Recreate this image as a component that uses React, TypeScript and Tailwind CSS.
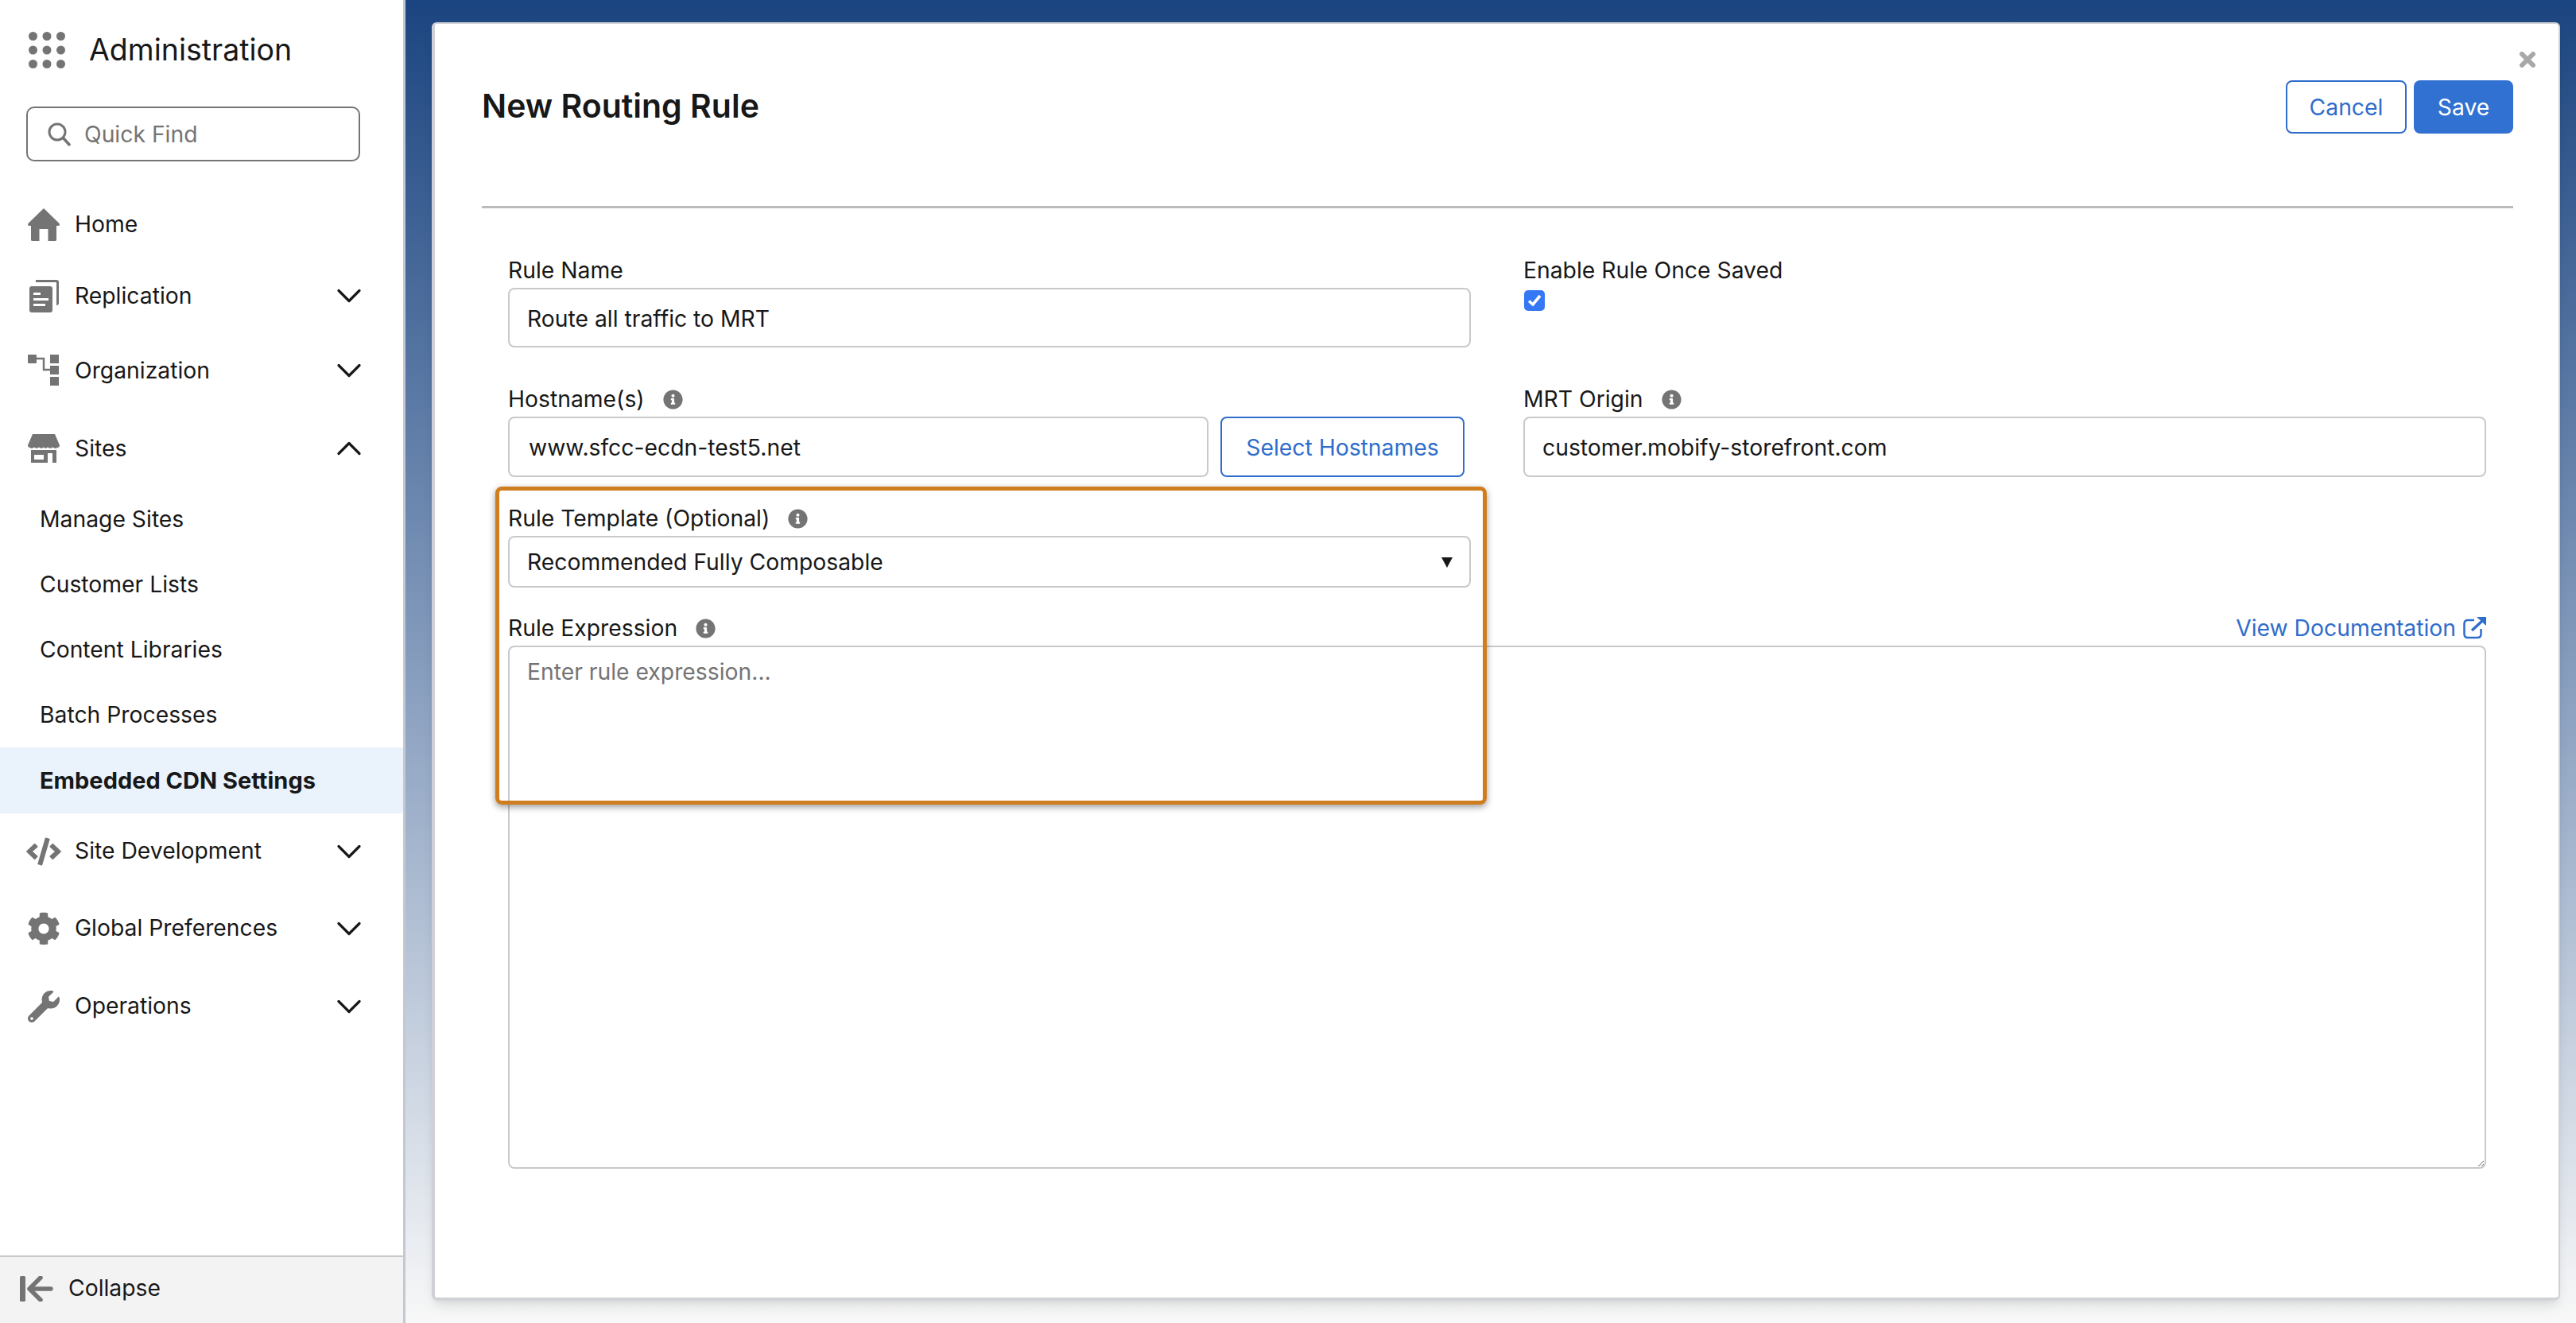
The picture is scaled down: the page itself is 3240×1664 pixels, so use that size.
import { ChevronDown, ChevronUp } from "lucide-react";
import { FaCode, FaCog, FaInfoCircle, FaWrench } from "react-icons/fa";
import type { ReactNode } from "react";

const font = "font-['Inter','Liberation_Sans',sans-serif]";

function HomeIcon() {
    return (
        <svg width="40" height="41" viewBox="0 0 40 41" fill="#747474">
            <path d="M20 0 L39.5 19 Q41 22 38 22 H36 V39.5 Q36 41 34.5 41 H25.5 V26 H14.5 V41 H5.5 Q4 41 4 39.5 V22 H2 Q-1 22 0.5 19 Z" />
        </svg>
    );
}

function ReplicationIcon() {
    return (
        <svg width="40" height="41" viewBox="0 0 40 41" fill="#747474">
            <path d="M10 0 H36 Q39 0 39 3 V29 Q39 32 36 32 V4 Q36 3 35 3 H10 Z" />
            <rect x="2" y="8" width="29" height="33" rx="3" />
            <rect x="7" y="16" width="9" height="3" fill="#fff" />
            <rect x="7" y="23" width="19" height="3" fill="#fff" />
            <rect x="7" y="30" width="15" height="3" fill="#fff" />
        </svg>
    );
}

function OrgIcon() {
    return (
        <svg width="40" height="40" viewBox="0 0 40 40" fill="#747474">
            <rect x="0" y="0" width="11" height="11" rx="1" />
            <rect x="28" y="0" width="11" height="11" />
            <rect x="28" y="14" width="11" height="11" />
            <rect x="28" y="28" width="11" height="11" />
            <path d="M10 5 H20 V19 H29" fill="none" stroke="#747474" strokeWidth="2.5" />
        </svg>
    );
}

function StoreIcon() {
    return (
        <svg width="40" height="36" viewBox="0 0 40 36" fill="#747474">
            <path d="M6 0 H34 L40 14 Q40 17 37 17 Q34.5 19 31.5 16.5 Q28 19 25 16.5 Q22 19 20 16.5 Q17 19 14 16.5 Q11 19 8 16.5 Q5 19 3 17 Q0 17 0 14 Z" />
            <path
                fillRule="evenodd"
                d="M4 20 H36 V36 H31 V24 H25 V36 H4 Z M8 26 V32 H20 V26 Z"
            />
        </svg>
    );
}

function CollapseIcon() {
    return (
        <svg width="42" height="32" viewBox="0 0 42 32" fill="#747474">
            <rect x="0" y="0" width="7" height="32" rx="1.5" />
            <path d="M26 2 L12 16 L26 30" fill="none" stroke="#747474" strokeWidth="5.5" strokeLinecap="round" strokeLinejoin="round" />
            <path d="M15 16 H39" fill="none" stroke="#747474" strokeWidth="5.5" strokeLinecap="round" />
        </svg>
    );
}

function ExternalIcon() {
    return (
        <svg width="29" height="28" viewBox="0 0 29 28" fill="none" stroke="#2f6dcb">
            <path d="M14 4 H6 Q1.5 4 1.5 8.5 V21.5 Q1.5 26 6 26 H18 Q22.5 26 22.5 21.5 V15" strokeWidth="2.5" />
            <path d="M11 17 L24 5" strokeWidth="3.5" />
            <path d="M17 0 H29 V11 Z" fill="#2f6dcb" stroke="none" />
        </svg>
    );
}

function AppsDots() {
    const spots = [5.5, 23, 40.5];
    return (
        <svg width="46" height="46" viewBox="0 0 46 46" fill="#747474">
            {spots.map((y) =>
                spots.map((x) => <circle key={`${x}-${y}`} cx={x} cy={y} r="5.5" />)
            )}
        </svg>
    );
}

function NavRow({ icon, label, open, h }: { icon: ReactNode; label: string; open?: boolean; h: string }) {
    return (
        <div className={`flex items-center pl-[33px] pr-[57px] ${h}`}>
            <span className="flex w-[44px] shrink-0 items-center justify-center">{icon}</span>
            <span className="ml-[17px] flex-1 text-[28.3px] text-[#181818]">{label}</span>
            {open === true && <ChevronUp size={52} strokeWidth={1.5} className="-mr-[15px] text-[#181818]" />}
            {open === false && <ChevronDown size={52} strokeWidth={1.5} className="-mr-[15px] text-[#181818]" />}
        </div>
    );
}

function SubRow({ label, active, h }: { label: string; active?: boolean; h: string }) {
    return (
        <div className={`flex items-center pl-[50px] text-[#181818] ${h} ${active ? "bg-[#eaf2fc] text-[29px] font-bold" : "text-[28.3px]"}`}>
            {label}
        </div>
    );
}

function FieldLabel({ children, info }: { children: ReactNode; info?: boolean }) {
    return (
        <div className="mb-[4px] flex h-[36px] items-center gap-[23px] text-[28.3px] text-[#181818]">
            <span>{children}</span>
            {info && <FaInfoCircle size={25} className="text-[#747474]" />}
        </div>
    );
}

const inputClass =
    "w-full rounded-[8px] border-2 border-[#c9c9c9] bg-white text-[28.3px] text-[#181818] outline-none";

export default function App() {
    return (
        <div className={`flex h-screen w-full overflow-hidden bg-linear-to-b from-[#1b4580] to-[#f8f8f8] ${font}`}>
            {/* Sidebar */}
            <aside className="flex h-full w-[510px] shrink-0 flex-col border-r-[3px] border-[#c4c8d0] bg-white">
                <div className="flex h-[134px] shrink-0 items-start pl-[36px] pt-[40px]">
                    <AppsDots />
                    <span className="ml-[30px] text-[37.5px] leading-[46px] text-[#181818]">Administration</span>
                </div>
                <div className="ml-[33px] flex h-[69px] w-[420px] shrink-0 items-center gap-[16px] rounded-[10px] border-2 border-[#747474] pl-[25px] text-[28.3px] text-[#747474]">
                    <svg width="30" height="30" viewBox="0 0 30 30" fill="none" stroke="#747474" strokeWidth="3">
                        <circle cx="12" cy="12" r="10" />
                        <path d="M19 19 L28 29" strokeWidth="3.5" />
                    </svg>
                    <span className="pt-[2px]">Quick Find</span>
                </div>
                <div className="mt-[34px]">
                    <NavRow icon={<HomeIcon />} label="Home" h="h-[90px]" />
                    <NavRow icon={<ReplicationIcon />} label="Replication" open={false} h="h-[90px]" />
                    <NavRow icon={<OrgIcon />} label="Organization" open={false} h="h-[98px]" />
                    <NavRow icon={<StoreIcon />} label="Sites" open={true} h="h-[98px]" />
                    <SubRow label="Manage Sites" h="h-[81px]" />
                    <SubRow label="Customer Lists" h="h-[82px]" />
                    <SubRow label="Content Libraries" h="h-[82px]" />
                    <SubRow label="Batch Processes" h="h-[82px]" />
                    <SubRow label="Embedded CDN Settings" active h="h-[83px]" />
                    <NavRow icon={<FaCode size={44} color="#747474" />} label="Site Development" open={false} h="h-[95px]" />
                    <NavRow icon={<FaCog size={42} color="#747474" />} label="Global Preferences" open={false} h="h-[99px]" />
                    <NavRow icon={<FaWrench size={40} color="#747474" />} label="Operations" open={false} h="h-[97px]" />
                </div>
                <div className="mt-auto flex h-[85px] items-center gap-[19px] border-t-2 border-[#c9c9c9] bg-[#f3f3f3] pb-[4px] pl-[25px] text-[28.3px] text-[#181818]">
                    <CollapseIcon />
                    Collapse
                </div>
            </aside>

            {/* Modal */}
            <main className="relative ml-[33px] mt-[28px] h-[1607px] w-[2677px] shrink-0 rounded-[6px] border-t-2 border-r-2 border-b-[3px] border-l-[4px] border-[#cfd1d6] bg-white pl-[59px] pr-[57px] pt-[71px] shadow-lg">
                <svg width="20" height="20" viewBox="0 0 20 20" stroke="#a8a8a8" strokeWidth="6" strokeLinecap="round" className="absolute right-[29px] top-[35px]">
                    <path d="M3 3 L17 17 M17 3 L3 17" />
                </svg>
                <div className="flex h-[67px] items-center justify-between">
                    <h1 className="-mt-[2px] text-[41px] font-semibold text-[#181818]">New Routing Rule</h1>
                    <div className="flex gap-[9px]">
                        <button className="h-[67px] w-[152px] rounded-[8px] border-2 border-[#2f6dcb] pt-[1px] text-[28.3px] text-[#2f6dcb]">
                            Cancel
                        </button>
                        <button className="h-[67px] w-[125px] rounded-[8px] bg-[#3071d1] pt-[1px] text-[28.3px] text-white">Save</button>
                    </div>
                </div>
                <div className="mt-[91px] border-t-[3px] border-[#bcbcbc]" />

                <div className="mt-[60px] pl-[33px] pr-[34px]">
                    <div className="grid grid-cols-2 gap-x-[66px]">
                        <div>
                            <FieldLabel>Rule Name</FieldLabel>
                            <input readOnly value="Route all traffic to MRT" className={`${inputClass} h-[75px] px-[22px] pt-[2px]`} />
                        </div>
                        <div>
                            <FieldLabel>Enable Rule Once Saved</FieldLabel>
                            <div className="ml-[1px] mt-[7px] flex h-[26px] w-[26px] items-center justify-center rounded-[5px] bg-[#3478f6]">
                                <svg width="18" height="16" viewBox="0 0 18 16" fill="none" stroke="#fff" strokeWidth="3.6">
                                    <path d="M2 8.5 L7 13 L16 2" />
                                </svg>
                            </div>
                        </div>
                    </div>

                    <div className="-mt-[3px] pt-[50px]">
                        <div className="grid grid-cols-2 gap-x-[66px]">
                            <div>
                                <FieldLabel info>Hostname(s)</FieldLabel>
                                <div className="flex gap-[15px] pr-[8px]">
                                    <input readOnly value="www.sfcc-ecdn-test5.net" className={`${inputClass} h-[76px] flex-1 px-[24px] pt-[2px]`} />
                                    <button className="h-[76px] w-[307px] shrink-0 rounded-[8px] border-2 border-[#2f6dcb] pt-[2px] text-[28.3px] text-[#2f6dcb]">
                                        Select Hostnames
                                    </button>
                                </div>
                            </div>
                            <div>
                                <FieldLabel info>MRT Origin</FieldLabel>
                                <input readOnly value="customer.mobify-storefront.com" className={`${inputClass} h-[76px] px-[22px] pt-[2px]`} />
                            </div>
                        </div>
                    </div>

                    <div className="mt-[34px] grid grid-cols-2 gap-x-[66px]">
                        <div>
                            <FieldLabel info>Rule Template (Optional)</FieldLabel>
                            <div className="relative">
                                <select className={`${inputClass} h-[65px] appearance-none px-[22px] pt-[2px]`} defaultValue="full">
                                    <option value="full">Recommended Fully Composable</option>
                                </select>
                                <svg width="14" height="13" viewBox="0 0 14 13" fill="#181818" className="absolute right-[23px] top-[27px]">
                                    <path d="M0 0 H14 L7 13 Z" />
                                </svg>
                            </div>
                        </div>
                    </div>

                    <div className="mt-[33px]">
                        <div className="flex items-start justify-between">
                            <FieldLabel info>Rule Expression</FieldLabel>
                            <a className="flex h-[36px] items-center gap-[9px] text-[28.3px] text-[#2f6dcb]">
                                View Documentation
                                <ExternalIcon />
                            </a>
                        </div>
                        <textarea
                            readOnly
                            placeholder="Enter rule expression..."
                            className={`${inputClass} block h-[658px] px-[22px] py-[10px] placeholder:text-[#747474]`}
                        />
                    </div>
                </div>

                {/* Orange highlight drawn over the form */}
                <div className="pointer-events-none absolute left-[76px] top-[582px] h-[400px] w-[1247px] rounded-[8px] border-[5px] border-[#cf7d1e] shadow-[0_3px_8px_rgba(0,0,0,0.4)]" />
            </main>
        </div>
    );
}
